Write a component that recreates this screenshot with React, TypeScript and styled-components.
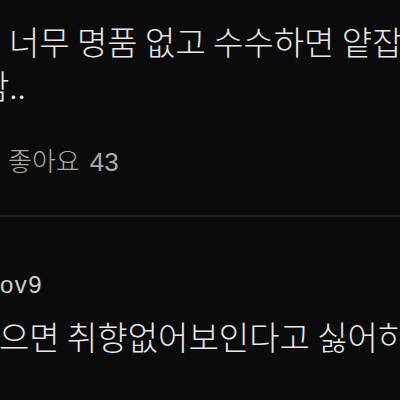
import styled, { createGlobalStyle } from 'styled-components'

const GlobalStyle = createGlobalStyle`
  html, body {
    margin: 0;
    padding: 0;
    background: #0b0b0b;
    overflow: hidden;
  }
  body {
    width: 400px;
    height: 400px;
    font-family: 'Noto Sans CJK KR', 'Noto Sans', sans-serif;
  }
`

const Feed = styled.div`
  display: flex;
  flex-direction: column;
  width: 400px;
  height: 400px;
  overflow: hidden;
`

const Comment = styled.section<{ $offset: number; $divider?: boolean }>`
  display: flex;
  flex-direction: column;
  margin-left: ${(p) => p.$offset}px;
  padding-bottom: ${(p) => (p.$divider ? '37px' : '0')};
  border-bottom: ${(p) => (p.$divider ? '2px solid #1b1b1b' : 'none')};
`

const Author = styled.div`
  margin: 53px 0 0 1px;
  font-family: 'Liberation Sans', 'Noto Sans CJK KR', sans-serif;
  font-size: 24px;
  line-height: 30px;
  letter-spacing: 1.5px;
  color: #cfcfcf;
  white-space: nowrap;
`

const Body = styled.p<{ $top: number; $indent?: number }>`
  margin: ${(p) => p.$top}px 0 0;
  width: 450px;
  font-size: 33px;
  font-weight: 300;
  line-height: 44px;
  color: #e8e8e8;
  text-indent: ${(p) => p.$indent ?? 0}px;
  white-space: pre-wrap;
`

const Actions = styled.div`
  display: flex;
  align-items: center;
  gap: 10px;
  margin: 39px 0 0 29px;
  font-family: 'Liberation Sans', 'Noto Sans CJK KR', sans-serif;
  font-size: 26px;
  font-weight: 300;
  line-height: 32px;
  color: #ababab;
`

export default function App() {
  return (
    <>
      <GlobalStyle />
      <Feed>
        <Comment $offset={-21} $divider>
          <Body $top={19} $indent={30}>
            {'너무 명품 없고 수수하면 얕잡\n함..'}
          </Body>
          <Actions>
            <span>좋아요</span>
            <span>43</span>
          </Actions>
        </Comment>
        <Comment $offset={-1}>
          <Author>ov9</Author>
          <Body $top={14}>으면 취향없어보인다고 싫어하</Body>
        </Comment>
      </Feed>
    </>
  )
}
